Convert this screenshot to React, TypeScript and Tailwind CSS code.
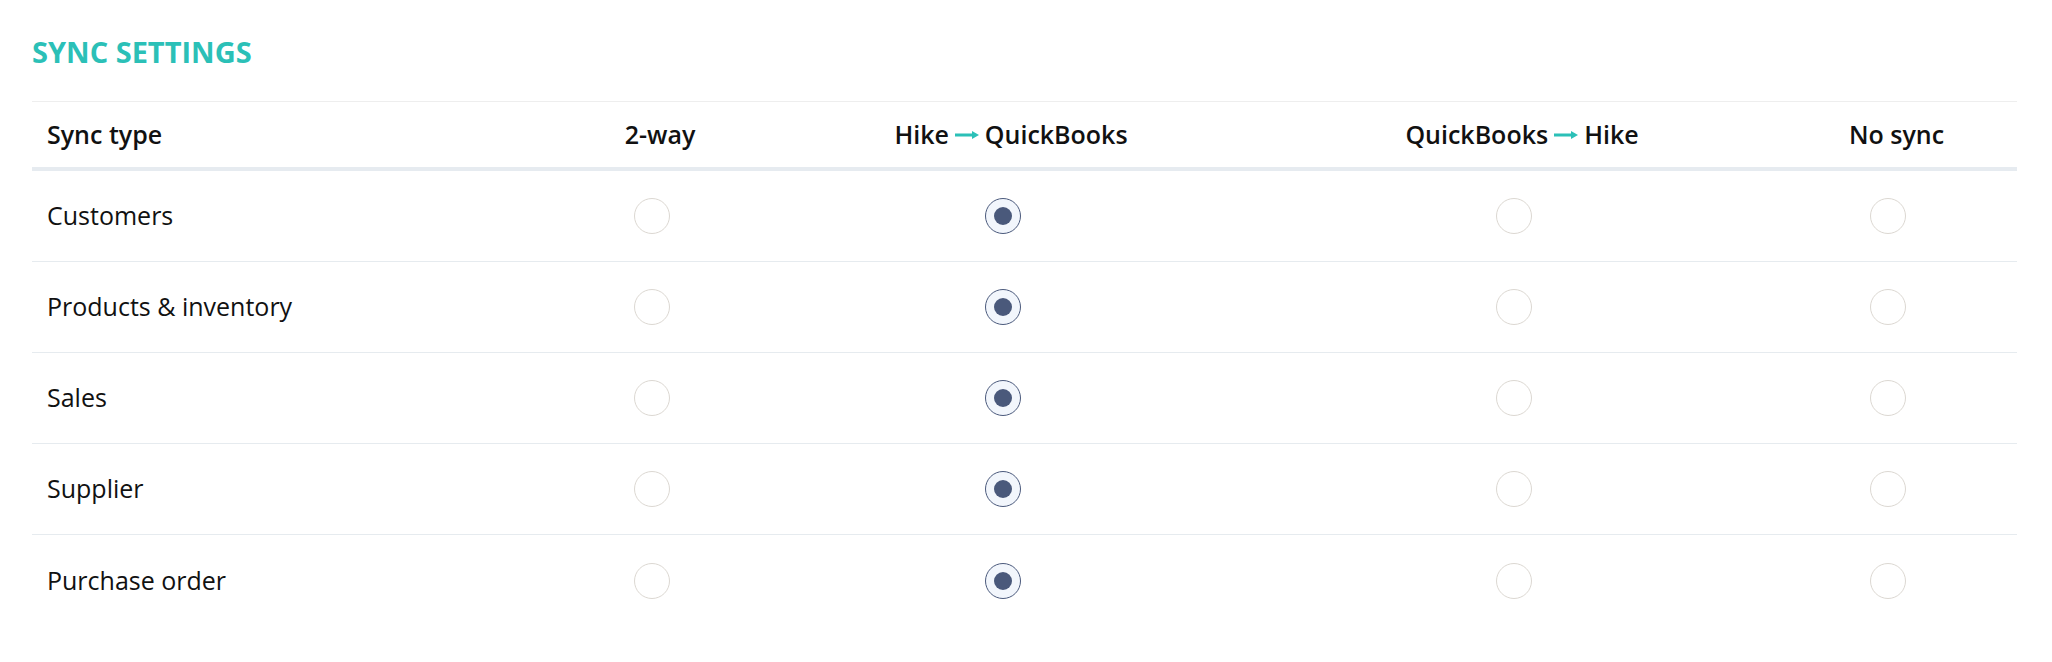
import React, { useState } from "react";

type Dir = "two" | "hq" | "qh" | "none";

const rows = [
  { key: "customers", label: "Customers" },
  { key: "products", label: "Products & inventory" },
  { key: "sales", label: "Sales" },
  { key: "supplier", label: "Supplier" },
  { key: "po", label: "Purchase order" },
];

const options: Dir[] = ["two", "hq", "qh", "none"];

function Arrow() {
  return (
    <svg width="24" height="8" viewBox="0 0 24 8" className="shrink-0">
      <rect x="0" y="2.5" width="18" height="3" fill="#2bc0b7" />
      <polygon points="17,0 24,4 17,8" fill="#2bc0b7" />
    </svg>
  );
}

function Radio({ checked, onClick }: { checked: boolean; onClick: () => void }) {
  return (
    <button
      type="button"
      onClick={onClick}
      className={`flex h-[36px] w-[36px] items-center justify-center rounded-full border ${
        checked ? "border-[#4b5a7c] bg-[#f2f6fc]" : "border-[#dcd8d2] bg-white"
      }`}
    >
      {checked && <span className="h-[18px] w-[18px] rounded-full bg-[#4a597b]" />}
    </button>
  );
}

export default function App() {
  const [values, setValues] = useState<Record<string, Dir>>({
    customers: "hq",
    products: "hq",
    sales: "hq",
    supplier: "hq",
    po: "hq",
  });

  const grid = "grid grid-cols-[534px_188px_514px_508px_1fr]";

  return (
    <div className="min-h-screen bg-white pl-8 pr-[35px] pt-[32px] font-['Open_Sans',sans-serif] text-[#111111]">
      <h2 className="text-[29px] font-bold leading-[40px] text-[#2bc0b7]">SYNC SETTINGS</h2>

      <div className="mt-[29px] border-t border-[#eeeeee]">
        <div className={`${grid} h-[69px] items-center border-b-4 border-[#e6ebf0] text-[25px] font-semibold`}>
          <div className="pl-[15px]">Sync type</div>
          <div className="text-center">2-way</div>
          <div className="flex items-center justify-center gap-[6px]">
            <span>Hike</span>
            <Arrow />
            <span>QuickBooks</span>
          </div>
          <div className="flex items-center justify-center gap-[6px]">
            <span>QuickBooks</span>
            <Arrow />
            <span>Hike</span>
          </div>
          <div className="text-center">No sync</div>
        </div>

        {rows.map((row, i) => (
          <div
            key={row.key}
            className={`${grid} h-[91px] items-center text-[25px] ${
              i < rows.length - 1 ? "border-b border-[#e6ebef]" : ""
            }`}
          >
            <div className="pl-[15px]">{row.label}</div>
            {options.map((opt) => (
              <div key={opt} className="flex justify-center pr-[17px]">
                <Radio
                  checked={values[row.key] === opt}
                  onClick={() => setValues((prev) => ({ ...prev, [row.key]: opt }))}
                />
              </div>
            ))}
          </div>
        ))}
      </div>
    </div>
  );
}
